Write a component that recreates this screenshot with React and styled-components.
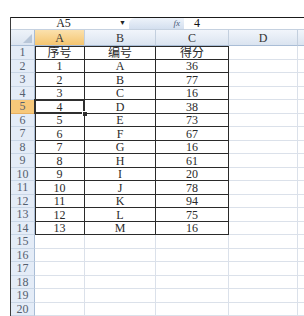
import React from 'react';
import styled, { createGlobalStyle, css } from 'styled-components';

const Global = createGlobalStyle`
  html, body { margin: 0; padding: 0; background: #fff; }
  body { font-family: "Liberation Serif", "Noto Sans CJK SC", serif; }
`;

const face = `"Liberation Serif", "Noto Sans CJK SC", serif`;

const Page = styled.div`
  padding: 17px 0 0 10px;
  width: 304px;
  height: 316px;
  box-sizing: border-box;
  overflow: hidden;
`;

const Window = styled.div`
  border-left: 1px solid #3c3c3c;
  display: flex;
  flex-direction: column;
  width: 300px;
`;

const FormulaBar = styled.div`
  display: flex;
  align-items: stretch;
  height: 11px;
  border-top: 1px solid #1a1a1a;
  border-bottom: 1px solid #c5d1e0;
  font-family: ${face};
  font-size: 12px;
  line-height: 11px;
`;

const NameBox = styled.div`
  width: 105px;
  text-align: center;
  color: #222;
`;

const Arrow = styled.div`
  width: 13px;
  display: flex;
  align-items: center;
  justify-content: center;
  font-size: 7px;
  color: #222;
`;

const FxZone = styled.div`
  width: 55px;
  border-radius: 6px 0 0 0;
  background: linear-gradient(#eef3fa, #d3dfef);
  display: flex;
  justify-content: flex-end;
  align-items: center;
  padding-right: 4px;
  box-sizing: border-box;
  font-style: italic;
  font-size: 9px;
  color: #4a5d78;
`;

const FormulaText = styled.div`
  flex: 1;
  padding-left: 10px;
  color: #111;
`;

const Sheet = styled.div`
  display: grid;
  grid-template-columns: 24px 50px 71px 73px 69px 1fr;
  grid-template-rows: 16px;
  grid-auto-rows: 13.5px;
  font-family: ${face};
  line-height: 1;
`;

const headerBg = css`
  background: ${p => (p.$active
    ? 'linear-gradient(#fbe1ad, #f5c56f)'
    : 'linear-gradient(#f1f5fb, #dbe4f0)')};
`;

const Corner = styled.div`
  position: relative;
  background: linear-gradient(#eef3f9, #dbe4f0);
  border-right: 1px solid #a9bdd6;
  border-bottom: 1px solid #a9bdd6;
  &::after {
    content: '';
    position: absolute;
    right: 2px;
    bottom: 2px;
    border-left: 9px solid transparent;
    border-bottom: 9px solid #b8c6d8;
  }
`;

const ColHead = styled.div`
  ${headerBg};
  border-right: 1px solid #c3cfde;
  border-bottom: 1px solid #a9bdd6;
  display: flex;
  align-items: center;
  justify-content: center;
  font-size: 12px;
  color: #333;
`;

const RowHead = styled.div`
  background: ${p => (p.$active ? '#f7c87a' : '#e4ecf7')};
  border-right: 1px solid #a9bdd6;
  border-bottom: 1px solid ${p => (p.$active ? '#e8b060' : '#c9d6e6')};
  display: flex;
  align-items: center;
  justify-content: center;
  font-size: 12px;
  color: #55606f;
`;

const Cell = styled.div`
  position: relative;
  border-right: 1px solid ${p => (p.$boxed ? '#2a2a2a' : '#dbe1ea')};
  border-bottom: 1px solid ${p => (p.$boxed ? '#2a2a2a' : '#dbe1ea')};
  box-shadow: ${p => [
    p.$top && 'inset 0 1px 0 #2a2a2a',
    p.$left && 'inset 1px 0 0 #2a2a2a',
  ].filter(Boolean).join(', ') || 'none'};
  display: flex;
  align-items: center;
  justify-content: center;
  padding-top: 1px;
  box-sizing: border-box;
  font-size: 12px;
  color: #2a2a2a;
  ${p => p.$selected && css`
    &::before {
      content: '';
      position: absolute;
      left: -1px;
      top: -1px;
      right: -1px;
      bottom: -1px;
      border: 2px solid #2f2f2f;
    }
    &::after {
      content: '';
      position: absolute;
      right: -4px;
      bottom: -4px;
      width: 4px;
      height: 4px;
      background: #2f2f2f;
      border: 1px solid #fff;
    }
  `}
`;

// E is only a sliver at the right edge, its label lies outside the view
const columns = ['A', 'B', 'C', 'D', ''];
const data = [
  ['序号', '编号', '得分'],
  ['1', 'A', '36'],
  ['2', 'B', '77'],
  ['3', 'C', '16'],
  ['4', 'D', '38'],
  ['5', 'E', '73'],
  ['6', 'F', '67'],
  ['7', 'G', '16'],
  ['8', 'H', '61'],
  ['9', 'I', '20'],
  ['10', 'J', '78'],
  ['11', 'K', '94'],
  ['12', 'L', '75'],
  ['13', 'M', '16'],
];

export default function App() {
  const rows = Array.from({ length: 20 }, (_, i) => i);
  return (
    <Page>
      <Global />
      <Window>
        <FormulaBar>
          <NameBox>A5</NameBox>
          <Arrow>▼</Arrow>
          <FxZone>fx</FxZone>
          <FormulaText>4</FormulaText>
        </FormulaBar>
        <Sheet>
          <Corner />
          {columns.map((c, ci) => (
            <ColHead key={ci} $active={c === 'A'}>{c}</ColHead>
          ))}
          {rows.map(r => (
            <React.Fragment key={r}>
              <RowHead $active={r === 4}>{r + 1}</RowHead>
              {columns.map((c, ci) => {
                const boxed = r < data.length && ci < 3;
                return (
                  <Cell
                    key={ci}
                    $boxed={boxed}
                    $top={boxed && r === 0}
                    $left={boxed && ci === 0}
                    $selected={r === 4 && ci === 0}
                  >
                    {boxed ? data[r][ci] : ''}
                  </Cell>
                );
              })}
            </React.Fragment>
          ))}
        </Sheet>
      </Window>
    </Page>
  );
}
